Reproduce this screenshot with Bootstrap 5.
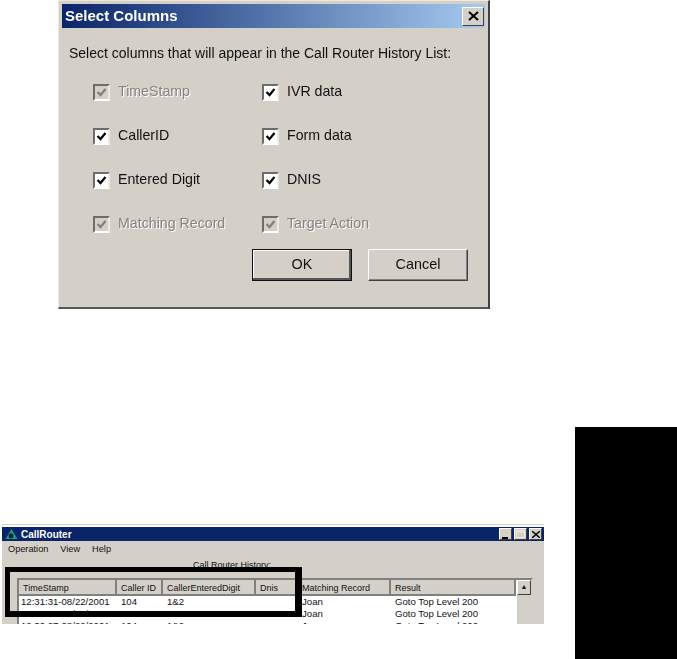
<!DOCTYPE html>
<html lang="en">
<head>
<meta charset="utf-8">
<title>Select Columns</title>
<link href="https://cdn.jsdelivr.net/npm/bootstrap@5.3.0/dist/css/bootstrap.min.css" rel="stylesheet">
<style>
html,body{margin:0;background:#fff;}
.sheet{width:677px;height:659px;overflow:hidden;font-family:"Liberation Sans",Arial,sans-serif;color:#111;}
.dlg{width:432px;height:309px;margin-left:58px;background:#d4d0c8;padding:3px 3px 0 3px;border-top:1px solid #eeeae2;border-left:1px solid #eeeae2;border-right:2px solid #404040;border-bottom:2px solid #555;filter:blur(.35px);}
.dlg-title{height:24px;padding:0 1px 0 3px;background:linear-gradient(90deg,#0a246a,#a6caf0);color:#fff;font-weight:700;font-size:15px;}
.xbtn{width:22px;height:19px;background:#d4d0c8;border:1px solid;border-color:#fff #404040 #404040 #fff;}
.dlg-lead{font-size:14px;line-height:18px;margin:16px 0 0 7px;white-space:nowrap;}
.opts{display:grid;grid-template-columns:169px 1fr;grid-auto-rows:44px;margin:21px 0 0 31px;font-size:14.2px;}
.opt{height:18px;gap:8px;}
.cbx{width:17px;height:17px;flex:none;background:#fff;border:2px solid;border-color:#6e6c68 #eeeae2 #fff #6e6c68;}
.opt.off{color:#86847f;text-shadow:1px 1px 0 #fff;}
.opt.off .cbx{background:#d4d0c8;}
.dlg-btns{gap:16px;margin:-10px 0 0 190px;}
.wbtn{width:100px;height:32px;padding:0;border-radius:0;background:#d4d0c8;color:#111;font-size:14.4px;border:1px solid;border-color:#fff #404040 #404040 #fff;box-shadow:inset -1px -1px 0 #808080;}
.wbtn.dflt{outline:1px solid #111;outline-offset:-1px;box-shadow:inset -2px -2px 0 #555,inset 1px 1px 0 #fff;}
.lower{height:232px;margin-top:118px;}
.shot{position:relative;margin:97px 0 0 2px;width:542px;height:100px;overflow:hidden;background:#d4d0c8;border-top:1px solid #d4d0c8;font-size:9.6px;color:#111;}
.shot-top{height:2px;background:#fff;}
.shot-title{height:14px;padding:0 2px 0 3px;background:#0a246a;color:#fff;font-weight:700;font-size:10px;gap:3px;}
.mini{gap:0;}
.minib{width:13px;height:12px;background:#d4d0c8;border:1px solid;border-color:#fff #404040 #404040 #fff;margin-left:2px;}
.shot-menu{gap:12px;padding:2px 0 0 6px;line-height:13px;font-size:9.2px;}
.shot-cap{padding-left:191px;line-height:12px;margin-top:3px;font-size:9px;}
.lst{margin:7px 0 0 15px;width:516px;height:70px;background:#fff;border:2px solid;border-color:#808080 #d4d0c8 #d4d0c8 #808080;}
.gridt{table-layout:fixed;width:497px;border-collapse:collapse;line-height:12px;}
.gridt th{font-weight:400;font-size:9px;height:15px;padding:1px 0 0 4px;background:#d4d0c8;border-right:2px solid #808080;border-bottom:2px solid #808080;white-space:nowrap;}
.gridt td{padding:0 0 0 5px;height:12px;white-space:nowrap;}
.gridt td:first-child{padding-left:2px;}
.sbar{width:15px;background:#d4d0c8;border-left:1px solid #fff;}
.sup{height:15px;background:#d4d0c8;border:1px solid;border-color:#fff #404040 #404040 #fff;font-size:7px;line-height:12px;text-align:center;}
.hilite{position:absolute;left:3px;top:42px;width:297px;height:50px;border:solid #000;border-width:5px 7px 6px 5px;}
.tabblock{width:102px;height:232px;background:#000;}
</style>
</head>
<body>
<div class="sheet">
  <div class="dlg">
    <div class="dlg-title d-flex align-items-center justify-content-between">
      <span>Select Columns</span>
      <span class="xbtn d-flex align-items-center justify-content-center">
        <svg width="11" height="10" viewBox="0 0 11 10"><path d="M1 1l9 8M10 1l-9 8" stroke="#000" stroke-width="2"/></svg>
      </span>
    </div>
    <p class="dlg-lead">Select columns that will appear in the Call Router History List:</p>
    <div class="opts">
      <div class="opt off d-flex align-items-center"><span class="cbx d-flex"><svg width="13" height="13" viewBox="0 0 13 13"><path d="M2.5 6l3 3 5-6" fill="none" stroke="#808080" stroke-width="2.2"/></svg></span><span>TimeStamp</span></div>
      <div class="opt d-flex align-items-center"><span class="cbx d-flex"><svg width="13" height="13" viewBox="0 0 13 13"><path d="M2.5 6l3 3 5-6" fill="none" stroke="#000" stroke-width="2.2"/></svg></span><span>IVR data</span></div>
      <div class="opt d-flex align-items-center"><span class="cbx d-flex"><svg width="13" height="13" viewBox="0 0 13 13"><path d="M2.5 6l3 3 5-6" fill="none" stroke="#000" stroke-width="2.2"/></svg></span><span>CallerID</span></div>
      <div class="opt d-flex align-items-center"><span class="cbx d-flex"><svg width="13" height="13" viewBox="0 0 13 13"><path d="M2.5 6l3 3 5-6" fill="none" stroke="#000" stroke-width="2.2"/></svg></span><span>Form data</span></div>
      <div class="opt d-flex align-items-center"><span class="cbx d-flex"><svg width="13" height="13" viewBox="0 0 13 13"><path d="M2.5 6l3 3 5-6" fill="none" stroke="#000" stroke-width="2.2"/></svg></span><span>Entered Digit</span></div>
      <div class="opt d-flex align-items-center"><span class="cbx d-flex"><svg width="13" height="13" viewBox="0 0 13 13"><path d="M2.5 6l3 3 5-6" fill="none" stroke="#000" stroke-width="2.2"/></svg></span><span>DNIS</span></div>
      <div class="opt off d-flex align-items-center"><span class="cbx d-flex"><svg width="13" height="13" viewBox="0 0 13 13"><path d="M2.5 6l3 3 5-6" fill="none" stroke="#808080" stroke-width="2.2"/></svg></span><span>Matching Record</span></div>
      <div class="opt off d-flex align-items-center"><span class="cbx d-flex"><svg width="13" height="13" viewBox="0 0 13 13"><path d="M2.5 6l3 3 5-6" fill="none" stroke="#808080" stroke-width="2.2"/></svg></span><span>Target Action</span></div>
    </div>
    <div class="dlg-btns d-flex">
      <button type="button" class="btn wbtn dflt">OK</button>
      <button type="button" class="btn wbtn">Cancel</button>
    </div>
  </div>
  <div class="lower d-flex justify-content-between align-items-start">
    <div class="shot">
      <div class="shot-top"></div>
      <div class="shot-title d-flex align-items-center">
        <svg width="13" height="12" viewBox="0 0 13 12"><path d="M6.5 1L12.5 11H.5z" fill="#1d9a86"/><circle cx="6" cy="8" r="2.4" fill="#0a1a30"/></svg>
        <span>CallRouter</span>
        <span class="mini d-flex ms-auto">
          <span class="minib d-flex align-items-end justify-content-center"><svg width="7" height="9" viewBox="0 0 7 9"><path d="M0 7h6v2H0z"/></svg></span>
          <span class="minib d-flex align-items-center justify-content-center"><svg width="9" height="8" viewBox="0 0 9 8"><path d="M.5.5h8v7h-8zM.5 2h8" fill="none" stroke="#eeeae2"/></svg></span>
          <span class="minib d-flex align-items-center justify-content-center"><svg width="8" height="7" viewBox="0 0 8 7"><path d="M0 0l8 7M8 0L0 7" stroke="#000" stroke-width="1.4"/></svg></span>
        </span>
      </div>
      <div class="shot-menu d-flex"><span>Operation</span><span>View</span><span>Help</span></div>
      <div class="shot-cap">Call Router History:</div>
      <div class="lst d-flex">
        <table class="gridt align-self-start">
          <colgroup><col style="width:97px"><col style="width:46px"><col style="width:93px"><col style="width:42px"><col style="width:93px"><col></colgroup>
          <thead><tr><th>TimeStamp</th><th>Caller ID</th><th>CallerEnteredDigit</th><th>Dnis</th><th>Matching Record</th><th>Result</th></tr></thead>
          <tbody>
            <tr><td>12:31:31-08/22/2001</td><td>104</td><td>1&amp;2</td><td></td><td>Joan</td><td>Goto Top Level 200</td></tr>
            <tr><td>12:30:32-08/22/2001</td><td>104</td><td>1&amp;2</td><td></td><td>Joan</td><td>Goto Top Level 200</td></tr>
            <tr><td>12:30:27-08/22/2001</td><td>104</td><td>1&amp;2</td><td></td><td>Joan</td><td>Goto Top Level 200</td></tr>
          </tbody>
        </table>
        <div class="sbar ms-auto"><div class="sup">&#9650;</div></div>
      </div>
      <div class="hilite"></div>
    </div>
    <div class="tabblock"></div>
  </div>
</div>
<script src="https://cdn.jsdelivr.net/npm/bootstrap@5.3.0/dist/js/bootstrap.bundle.min.js"></script>
</body>
</html>
